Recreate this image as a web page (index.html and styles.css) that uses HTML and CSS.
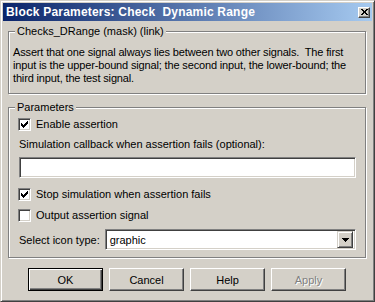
FILE: index.html
```html
<!DOCTYPE html>
<html lang="en">
<head>
  <meta charset="UTF-8" />
  <title>Block Parameters: Check Dynamic Range</title>
  <link rel="stylesheet" href="styles.css">
</head>
<body>
  <div class="window">
    <div class="titlebar">
      <span class="title">Block Parameters: Check&nbsp; Dynamic Range</span>
      <span class="close" role="button" aria-label="Close">
        <svg width="7" height="6" viewBox="0 0 7 6"><path d="M0 0h2v1H0zM5 0h2v1H5zM1 1h2v1H1zM4 1h2v1H4zM2 2h3v1H2zM2 3h3v1H2zM1 4h2v1H1zM4 4h2v1H4zM0 5h2v1H0zM5 5h2v1H5z" fill="#000"/></svg>
      </span>
    </div>

    <div class="client">
      <fieldset class="group">
        <legend>Checks_DRange (mask) (link)</legend>
        <p class="desc">Assert that one signal always lies between two other signals.&nbsp; The first<br>input is the upper-bound signal; the second input, the lower-bound; the<br>third input, the test signal.</p>
      </fieldset>

      <fieldset class="group">
        <legend>Parameters</legend>
        <div class="params">
          <label class="check first"><span class="box"><svg width="7" height="7" viewBox="0 0 7 7"><path d="M0 2h1v3H0zM1 3h1v3H1zM2 4h1v3H2zM3 3h1v3H3zM4 2h1v3H4zM5 1h1v3H5zM6 0h1v3H6z" fill="#000"/></svg></span>Enable assertion</label>
          <div class="field-label">Simulation callback when assertion fails (optional):</div>
          <div class="textbox"></div>
          <label class="check stop"><span class="box"><svg width="7" height="7" viewBox="0 0 7 7"><path d="M0 2h1v3H0zM1 3h1v3H1zM2 4h1v3H2zM3 3h1v3H3zM4 2h1v3H4zM5 1h1v3H5zM6 0h1v3H6z" fill="#000"/></svg></span>Stop simulation when assertion fails</label>
          <label class="check output"><span class="box"></span>Output assertion signal</label>
          <div class="select-row">
            <span class="select-label">Select icon type:</span>
            <div class="combo">
              <span class="value">graphic</span>
              <span class="drop"><svg width="7" height="4" viewBox="0 0 7 4"><path d="M0 0h7v1H0zM1 1h5v1H1zM2 2h3v1H2zM3 3h1v1H3z" fill="#000"/></svg></span>
            </div>
          </div>
        </div>
      </fieldset>

      <div class="buttons">
        <button class="btn default">OK</button>
        <button class="btn">Cancel</button>
        <button class="btn">Help</button>
        <button class="btn" disabled>Apply</button>
      </div>
    </div>
  </div>
</body>
</html>
```

FILE: styles.css
```css
body {
  margin: 0;
  background: #d4d0c8;
  font-family: 'Liberation Sans', Arial, sans-serif;
  font-size: 11px;
  color: #000;
}

.window {
  width: 375px;
  height: 302px;
  box-sizing: border-box;
  padding: 2px;
  background: #d4d0c8;
  border: 1px solid;
  border-color: #d4d0c8 #404040 #404040 #d4d0c8;
  box-shadow: inset 1px 1px 0 #fff, inset -1px -1px 0 #808080;
}

.titlebar {
  height: 18px;
  display: flex;
  align-items: center;
  justify-content: space-between;
  padding: 0 2px 0 3px;
  background: linear-gradient(to right, #0a246a, #a6caf0);
}

.title {
  color: #fff;
  font-weight: bold;
  font-size: 12px;
  letter-spacing: 0.2px;
  white-space: nowrap;
}

.close {
  width: 12px;
  height: 11px;
  box-sizing: border-box;
  display: flex;
  align-items: center;
  justify-content: center;
  background: #d4d0c8;
  border: 1px solid;
  border-color: #fff #404040 #404040 #fff;
  box-shadow: inset -1px -1px 0 #808080;
}

.client {
  padding: 4px 6px 0 5px;
}

.group {
  margin: 0;
  padding: 0 4px;
  border: 1px solid #808080;
  box-shadow: 1px 1px 0 #fff, inset 1px 1px 0 #fff;
}

.group + .group {
  margin-top: 7px;
}

.group legend {
  padding: 0 2px;
  margin-left: 2px;
  line-height: 13px;
  background: #d4d0c8;
}

.desc {
  margin: 8px 0 8px;
  line-height: 13px;
  letter-spacing: -0.15px;
  white-space: nowrap;
}

.params {
  padding: 4px 5px 7px 6px;
}

.check {
  display: flex;
  align-items: center;
  gap: 5px;
  height: 13px;
  line-height: 13px;
  margin-left: -1px;
}

.check.stop {
  margin-top: 10px;
}

.check.output {
  margin-top: 8px;
}

.box {
  width: 13px;
  height: 13px;
  box-sizing: border-box;
  display: flex;
  align-items: center;
  justify-content: center;
  background: #fff;
  border: 1px solid;
  border-color: #808080 #fff #fff #808080;
  box-shadow: inset 1px 1px 0 #404040, inset -1px -1px 0 #d4d0c8;
}

.field-label {
  margin-top: 7px;
  line-height: 13px;
}

.textbox,
.combo {
  box-sizing: border-box;
  background: #fff;
  border: 1px solid;
  border-color: #808080 #fff #fff #808080;
  box-shadow: inset 1px 1px 0 #404040, inset -1px -1px 0 #d4d0c8;
}

.textbox {
  height: 21px;
  margin-top: 6px;
}

.select-row {
  display: flex;
  align-items: center;
  gap: 5px;
  margin-top: 7px;
}

.combo {
  flex: 1;
  height: 21px;
  display: flex;
  align-items: center;
  justify-content: space-between;
  padding: 2px;
}

.combo .value {
  padding-left: 2px;
}

.drop {
  width: 16px;
  height: 17px;
  box-sizing: border-box;
  display: flex;
  align-items: center;
  justify-content: center;
  background: #d4d0c8;
  border: 1px solid;
  border-color: #d4d0c8 #404040 #404040 #d4d0c8;
  box-shadow: inset 1px 1px 0 #fff, inset -1px -1px 0 #808080;
}

.buttons {
  display: flex;
  justify-content: center;
  gap: 6px;
  margin-top: 10px;
}

.btn {
  width: 75px;
  height: 23px;
  box-sizing: border-box;
  padding: 0;
  font-family: 'Liberation Sans', Arial, sans-serif;
  font-size: 11px;
  color: #000;
  background: #d4d0c8;
  border: 1px solid;
  border-color: #fff #404040 #404040 #fff;
  box-shadow: inset -1px -1px 0 #808080;
}

.btn.default {
  border-color: #000;
  box-shadow: inset 1px 1px 0 #fff, inset -1px -1px 0 #404040, inset -2px -2px 0 #808080;
}

.btn:disabled {
  color: #808080;
  text-shadow: 1px 1px 0 #fff;
}
```
